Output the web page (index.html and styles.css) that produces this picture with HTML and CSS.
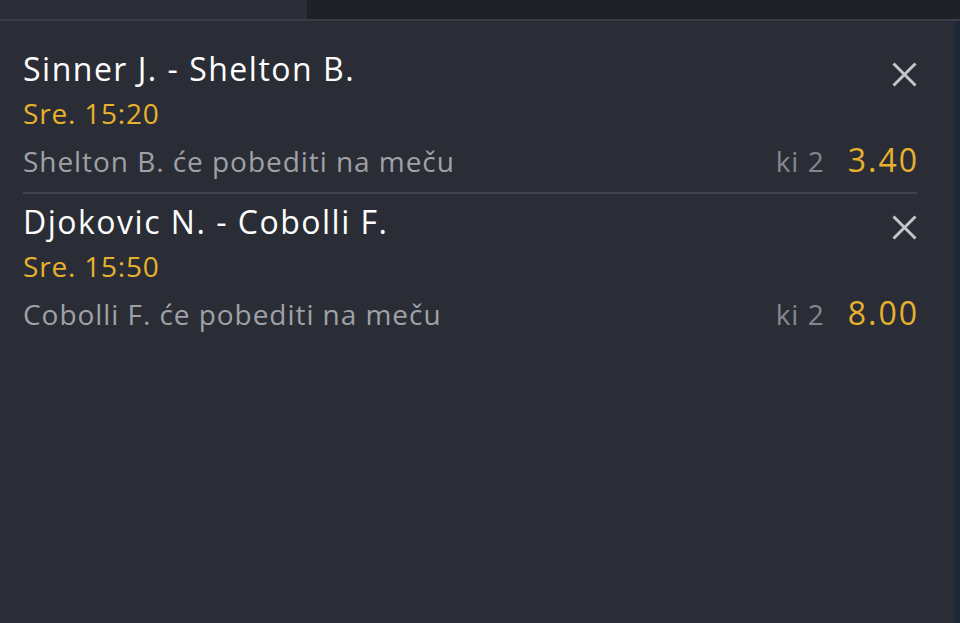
FILE: index.html
```html
<!DOCTYPE html>
<html lang="sr">
<head>
<meta charset="utf-8">
<link rel="stylesheet" href="styles.css">
</head>
<body>
<div class="screen">
  <div class="tabs">
    <div class="tab tab-active"></div>
    <div class="tab tab-rest"></div>
  </div>
  <div class="list">
    <div class="bet">
      <div class="bet-head">
        <div class="match">Sinner J. - Shelton B.</div>
        <svg class="close" viewBox="0 0 25 25" width="25" height="25"><path d="M1.5 1.5 L23.5 23.5 M23.5 1.5 L1.5 23.5" stroke="#c5c6ca" stroke-width="3" fill="none"/></svg>
      </div>
      <div class="time">Sre. 15:20</div>
      <div class="bet-foot">
        <div class="pick">Shelton B. će pobediti na meču</div>
        <div class="market">ki 2</div>
        <div class="odds">3.40</div>
      </div>
    </div>
    <div class="bet">
      <div class="bet-head">
        <div class="match">Djokovic N. - Cobolli F.</div>
        <svg class="close" viewBox="0 0 25 25" width="25" height="25"><path d="M1.5 1.5 L23.5 23.5 M23.5 1.5 L1.5 23.5" stroke="#c5c6ca" stroke-width="3" fill="none"/></svg>
      </div>
      <div class="time">Sre. 15:50</div>
      <div class="bet-foot">
        <div class="pick">Cobolli F. će pobediti na meču</div>
        <div class="market">ki 2</div>
        <div class="odds">8.00</div>
      </div>
    </div>
  </div>
</div>
</body>
</html>
```
FILE: styles.css
```css
html, body {
  margin: 0;
  padding: 0;
  background: #2a2d36;
}
.screen {
  width: 960px;
  height: 623px;
  background: #2a2d36;
  font-family: "Open Sans", Lato, sans-serif;
  box-shadow: inset -5px 0 0 #1b2838;
  overflow: hidden;
}
.tabs {
  display: flex;
  height: 19px;
  border-bottom: 2px solid #3a3d45;
}
.tab-active {
  width: 307px;
  background: #2b2e37;
}
.tab-rest {
  flex: 1;
  background: #1f2129;
}
.list {
  padding: 28px 43px 0 23px;
}
.bet {
  border-bottom: 2px solid #41444c;
  padding-bottom: 13px;
}
.bet:last-child {
  border-bottom: none;
}
.bet + .bet {
  padding-top: 8px;
}
.bet-head {
  display: flex;
  justify-content: space-between;
  align-items: flex-start;
}
.match {
  color: #fdfdfd;
  font-size: 32px;
  line-height: 40px;
  letter-spacing: 1.5px;
}
.close {
  margin-top: 13px;
}
.time {
  color: #e8b12c;
  font-size: 28px;
  line-height: 34px;
  letter-spacing: 0.8px;
  margin-top: 7px;
}
.bet-foot {
  display: flex;
  align-items: baseline;
  margin-top: 12px;
}
.pick {
  color: #9fa1a7;
  font-size: 28px;
  line-height: 36px;
  letter-spacing: 0.95px;
  flex: 1;
}
.market {
  color: #85878e;
  font-size: 28px;
  line-height: 36px;
  letter-spacing: 1px;
  margin-right: 23px;
}
.odds {
  color: #e8b12c;
  font-size: 32px;
  line-height: 36px;
  letter-spacing: 2px;
  margin-right: -2px;
}
```
